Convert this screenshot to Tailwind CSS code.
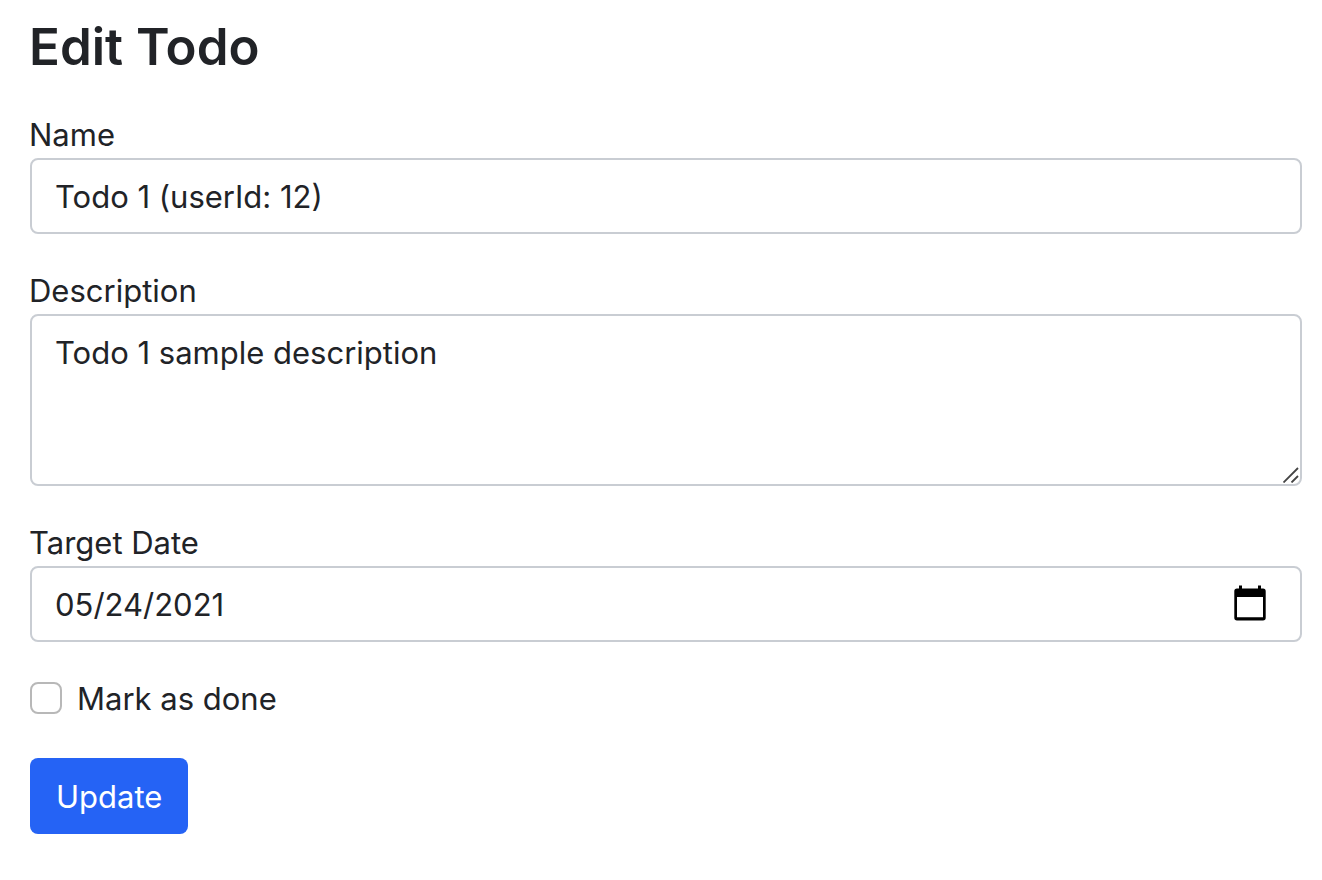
<!DOCTYPE html>
<html lang="en">
<head>
<meta charset="utf-8">
<title>Edit Todo</title>
<script src="https://cdn.jsdelivr.net/npm/@tailwindcss/browser@4"></script>
</head>
<body class="bg-white font-['Inter',sans-serif] text-[31px] leading-[46px] text-[#212327]">
<main class="pt-[14px] pr-5 pl-[29px]">
  <h1 class="mb-8 text-[51px] leading-[66px] font-semibold">Edit Todo</h1>
  <form class="flex flex-col items-start">
    <label for="name">Name</label>
    <div class="mb-8 w-full pl-px">
      <input id="name" type="text" value="Todo 1 (userId: 12)" class="block h-[76px] w-full rounded-lg border-2 border-[#c9cdd3] px-[23px]">
    </div>
    <label for="description" class="pt-[2px]">Description</label>
    <div class="relative mb-8 w-full pl-px">
      <textarea id="description" class="block h-[172px] w-full resize-none rounded-lg border-2 border-[#c9cdd3] px-[23px] py-[14px]">Todo 1 sample description</textarea>
      <svg class="absolute right-[3px] bottom-[3px] size-4" viewBox="0 0 16 16" fill="none" stroke="#444" stroke-width="1.8" aria-hidden="true"><path d="M.5 15.500 15 1M8.500 15.500l6.500-6.500"/></svg>
    </div>
    <label for="date" class="pt-[2px]">Target Date</label>
    <div class="mb-8 w-full pl-px">
      <div class="flex h-[76px] items-center rounded-lg border-2 border-[#c9cdd3] pr-[34px] pl-[23px]">
        <input id="date" type="text" value="05/24/2021" class="min-w-0 flex-1 pt-[2px]">
        <button type="button" aria-label="Open calendar" class="pb-[2px]">
          <svg class="block h-9 w-8" viewBox="0 0 32 36"><path fill="#000" fill-rule="evenodd" d="M5 .5h3v3h16v-3h3v3h2A2.700 2.700 0 0 1 31.700 6.200v26.600a2.700 2.700 0 0 1-2.700 2.700H3A2.700 2.700 0 0 1 .3 32.800V6.200A2.700 2.700 0 0 1 3 3.500h2zM3 12v20.300h26V12z"/></svg>
        </button>
      </div>
    </div>
    <div class="mb-9 flex h-12 items-center gap-[15px] pl-px">
      <input id="done" type="checkbox" class="size-8 appearance-none rounded-lg border-2 border-[#b8b8b8] bg-white">
      <label for="done" class="pt-[2px]">Mark as done</label>
    </div>
    <div class="pl-px">
      <button type="submit" class="block h-[76px] rounded-lg bg-[#2563f5] px-[26px] pt-[2px] text-white">Update</button>
    </div>
  </form>
</main>
</body>
</html>
